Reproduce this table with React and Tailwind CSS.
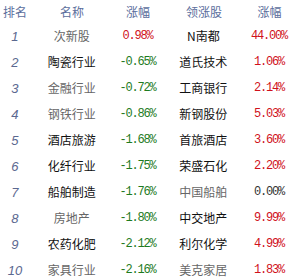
import React from 'react';

const rows = [
    { rank: 1, name: '次新股', nameDim: true, pct: '0.98%', up: true, lead: 'N南都', leadDim: false, leadPct: '44.00%', leadUp: 1 },
    { rank: 2, name: '陶瓷行业', nameDim: false, pct: '-0.65%', up: false, lead: '道氏技术', leadDim: false, leadPct: '1.06%', leadUp: 1 },
    { rank: 3, name: '金融行业', nameDim: true, pct: '-0.72%', up: false, lead: '工商银行', leadDim: false, leadPct: '2.14%', leadUp: 1 },
    { rank: 4, name: '钢铁行业', nameDim: true, pct: '-0.86%', up: false, lead: '新钢股份', leadDim: false, leadPct: '5.03%', leadUp: 1 },
    { rank: 5, name: '酒店旅游', nameDim: false, pct: '-1.68%', up: false, lead: '首旅酒店', leadDim: false, leadPct: '3.60%', leadUp: 1 },
    { rank: 6, name: '化纤行业', nameDim: false, pct: '-1.75%', up: false, lead: '荣盛石化', leadDim: false, leadPct: '2.20%', leadUp: 1 },
    { rank: 7, name: '船舶制造', nameDim: false, pct: '-1.76%', up: false, lead: '中国船舶', leadDim: true, leadPct: '0.00%', leadUp: 0 },
    { rank: 8, name: '房地产', nameDim: true, pct: '-1.80%', up: false, lead: '中交地产', leadDim: false, leadPct: '9.99%', leadUp: 1 },
    { rank: 9, name: '农药化肥', nameDim: false, pct: '-2.12%', up: false, lead: '利尔化学', leadDim: false, leadPct: '4.99%', leadUp: 1 },
    { rank: 10, name: '家具行业', nameDim: true, pct: '-2.16%', up: false, lead: '美克家居', leadDim: true, leadPct: '1.83%', leadUp: 1 },
];

const cjk = { fontFamily: '"Noto Sans CJK SC", "Noto Sans", sans-serif' };
const mono = { fontFamily: '"Liberation Mono", "DejaVu Sans Mono", monospace' };

const Pct = ({ value, up }) => {
    const color = up === 0 ? 'text-[#333333]' : up ? 'text-[#d0111b]' : 'text-[#1e7b1e]';
    return (
        <div className={`w-[48px] text-center text-[12px] tracking-[-1.2px] ${color}`} style={mono}>
            {value}
        </div>
    );
};

export default function App() {
    return (
        <div className="w-[293px] h-[278px] bg-white overflow-hidden" style={cjk}>
            <div className="flex h-[23px] items-center text-[12px] text-[#5b6e9c] leading-none">
                <div className="w-[30px] text-center">排名</div>
                <div className="w-[84px] text-center">名称</div>
                <div className="w-[48px] text-center">涨幅</div>
                <div className="w-[84px] text-center">领涨股</div>
                <div className="w-[47px] text-center">涨幅</div>
            </div>

            {rows.map(r => (
                <div key={r.rank} className="flex h-[26px] items-center text-[12px] leading-none">
                    <div
                        className="w-[30px] text-center italic text-[13px] text-[#5b6890]"
                        style={{ fontFamily: '"Liberation Sans", Arial, sans-serif', fontWeight: 300 }}
                    >
                        {r.rank}
                    </div>
                    <div className={`w-[84px] text-center ${r.nameDim ? 'text-[#666666]' : 'text-[#111111]'}`}>
                        {r.name}
                    </div>
                    <Pct value={r.pct} up={r.up} />
                    <div className={`w-[84px] text-center ${r.leadDim ? 'text-[#666666]' : 'text-[#111111]'}`}>
                        {r.lead}
                    </div>
                    <Pct value={r.leadPct} up={r.leadUp} />
                </div>
            ))}
        </div>
    );
}
